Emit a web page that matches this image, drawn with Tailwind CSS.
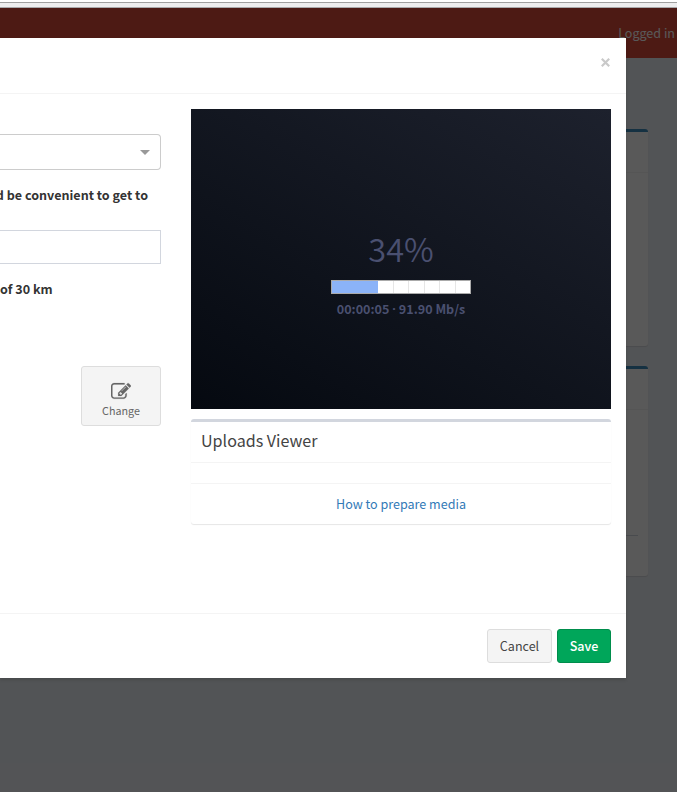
<!DOCTYPE html>
<html lang="en">
<head>
<meta charset="utf-8">
<title>Uploads</title>
<script src="https://cdn.jsdelivr.net/npm/@tailwindcss/browser@4"></script>
</head>
<body class="w-[677px] h-[792px] overflow-hidden bg-[#ecf0f5] font-['Noto_Sans_CJK_SC','Noto_Sans',sans-serif] text-[12.55px] leading-5 text-[#333]">
<div class="relative w-[677px] h-[792px] flex flex-col overflow-hidden">
  <div class="h-2 shrink-0 bg-[#eeeeef] border-t-2 border-t-white border-b border-b-[#a9a9ab]"><div class="h-px bg-[#a0a0a0]"></div></div>
  <div class="relative flex-1 bg-[#ecf0f5]">
    <header class="h-[50px] bg-[#dd4b39] flex items-center justify-end pr-[2px] text-white whitespace-nowrap">Logged in</header>
    <main class="pt-[71px] w-[648px] flex flex-col gap-5">
      <section class="h-[217px] bg-white border-t-3 border-[#3c8dbc] rounded-[3px] shadow-[0_1px_1px_rgba(0,0,0,0.1)]"><div class="h-[41px] border-b border-[#f4f4f4]"></div></section>
      <section class="h-[210px] bg-white border-t-3 border-[#3c8dbc] rounded-[3px] shadow-[0_1px_1px_rgba(0,0,0,0.1)]">
        <div class="h-[41px] border-b border-[#f4f4f4]"></div>
        <div class="h-[126px] mr-[10px] border-b border-[#d2d6de]"></div>
      </section>
    </main>
    <div class="absolute inset-0 bg-black/65"></div>
  </div>

  <div class="absolute left-0 top-[38px] w-[626px] h-[640px] bg-white flex flex-col shadow-[0_2px_3px_rgba(0,0,0,0.125)]">
    <div class="h-[56px] shrink-0 border-b border-[#f4f4f4] flex justify-end pr-[16px] pt-[20px]">
      <svg class="w-[9px] h-[9px]" viewBox="0 0 9 9" fill="none" stroke="#c9c9c9" stroke-width="2.2"><path d="M.8.8l7.4 7.4M8.2.8L.8 8.2"/></svg>
    </div>
    <div class="flex-1 flex gap-[30px] pt-[15px]">
      <div class="w-[161px] flex flex-col whitespace-nowrap">
        <div class="mt-[25px] h-[36px] border border-l-0 border-[#ccc] rounded-r-[4px] flex items-center justify-end pr-[10px]"><svg class="w-[10px] h-[5px]" viewBox="0 0 10 5"><path d="M0 0h10L5 5z" fill="#999"/></svg></div>
        <div class="mt-[15px] h-5 pr-[13px] flex justify-end font-bold">d be convenient to get to</div>
        <div class="mt-[25px] h-[34px] border border-l-0 border-[#d2d6de]"></div>
        <div class="mt-[15px] h-5 font-bold">of 30 km</div>
        <div class="mt-[67px] ml-[81px] w-[80px] h-[60px] bg-[#f4f4f4] border border-[#ddd] rounded-[3px] flex flex-col items-center text-[#666] text-[10.75px]">
          <svg class="mt-[14px] w-[20px] h-[20px]" viewBox="0 -60 1792 1792" fill="#666" stroke="#666" stroke-width="15"><path d="M888 1184l116-116-152-152-116 116v56h96v96h56zm440-720q-16-16-33 1l-350 350q-17 17-1 33t33-1l350-350q17-17 1-33zm80 594v190q0 119-84.500 203.500t-203.500 84.500h-832q-119 0-203.500-84.500t-84.500-203.500v-832q0-119 84.500-203.500t203.500-84.500h832q63 0 117 25 15 7 18 23 3 17-9 29l-49 49q-14 14-32 8-23-6-45-6h-832q-66 0-113 47t-47 113v832q0 66 47 113t113 47h832q66 0 113-47t47-113v-126q0-13 9-22l64-64q15-15 35-7t20 29zm-96-738l288 288-672 672h-288v-288zm444 132l-92 92-288-288 92-92q28-28 68-28t68 28l152 152q28 28 28 68t-28 68z"/></svg>
          <div class="leading-5">Change</div>
        </div>
      </div>
      <div class="w-[420px] flex flex-col">
        <div class="h-[300px] bg-[linear-gradient(30deg,#050910,#1d212d)] flex flex-col items-center text-[#4a5070]">
          <div class="mt-[119px] h-[40px] leading-[40px] text-[32.5px] font-[350]">34%</div>
          <div class="mt-[12px] w-[140px] h-[14px] border border-[#aaa] bg-white flex">
            <div class="w-[46px] bg-[#8bb3f8]"></div>
            <div class="w-[16px] border-r border-[#e6e6e6]"></div><div class="w-[15px] border-r border-[#e6e6e6]"></div><div class="w-[16px] border-r border-[#e6e6e6]"></div><div class="w-[15px] border-r border-[#e6e6e6]"></div><div class="w-[16px] border-r border-[#e6e6e6]"></div>
          </div>
          <div class="mt-[5px] h-5 font-bold flex gap-[3px] whitespace-nowrap"><span>00:00:05</span><span class="font-['Noto_Sans',sans-serif]">·</span><span>91.90 Mb/s</span></div>
        </div>
        <div class="mt-[10px] h-[105px] border-t-3 border-[#d2d6de] rounded-[3px] shadow-[0_1px_1px_rgba(0,0,0,0.1)] flex flex-col">
          <div class="h-[41px] border-b border-[#f4f4f4] pl-[10px] pb-[5px] flex items-center text-[16.1px] text-[#444]">Uploads Viewer</div>
          <div class="h-[21px] border-b border-[#f4f4f4]"></div>
          <div class="flex-1 flex items-center justify-center text-[#337ab7]">How to prepare media</div>
        </div>
      </div>
    </div>
    <div class="h-[65px] shrink-0 border-t border-[#f4f4f4] pt-[15px] pr-[15px] flex justify-end gap-[5px]">
      <button class="w-[65px] h-[34px] bg-[#f4f4f4] border border-[#ddd] rounded-[3px] text-[#444]">Cancel</button>
      <button class="w-[54px] h-[34px] bg-[#00a65a] border border-[#008d4c] rounded-[3px] text-white font-medium">Save</button>
    </div>
  </div>
</div>
</body>
</html>
